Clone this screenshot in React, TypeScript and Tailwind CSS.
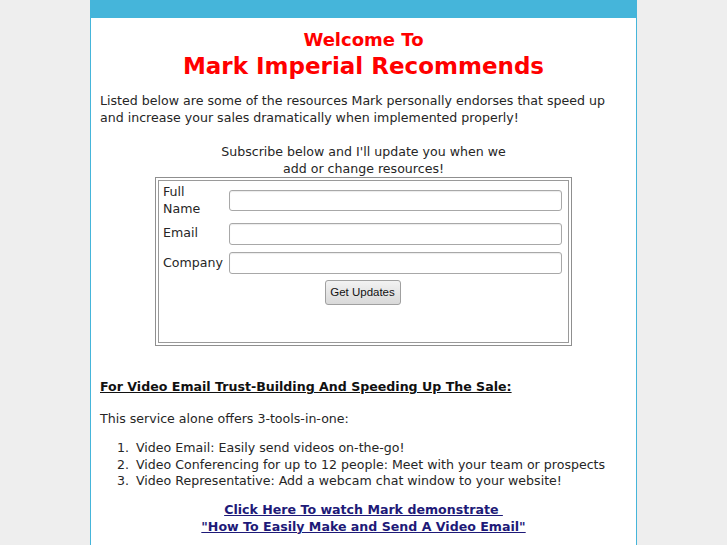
import React from "react";

export default function App() {
  const font = { fontFamily: '"DejaVu Sans", Verdana, sans-serif' };
  const items = [
    "Video Email: Easily send videos on-the-go!",
    "Video Conferencing for up to 12 people: Meet with your team or prospects",
    "Video Representative: Add a webcam chat window to your website!",
  ];
  return (
    <div className="min-h-screen w-full bg-[#eeeeee]" style={font}>
      <div className="mx-auto w-[547px] min-h-screen bg-white border-x border-[#45b5da]">
        <div className="h-[18px] bg-[#45b5da]" />
        <div className="px-[9px] text-[12.6px] leading-[16.5px] text-[#262626]">
          <div className="mt-[10px] text-center font-bold text-[#ff0000]">
            <div className="text-[18px] leading-[24px]">Welcome To</div>
            <div className="text-[23px] leading-[28px]">Mark Imperial Recommends</div>
          </div>
          <p className="mt-[13px]">
            Listed below are some of the resources Mark personally endorses that speed up and
            increase your sales dramatically when implemented properly!
          </p>
          <p className="mt-[18px] text-center">
            Subscribe below and I'll update you when we
            <br />
            add or change resources!
          </p>
          <div className="mx-auto w-[417px] border border-[#8f8f8f] p-[2px]">
            <div className="h-[163px] border border-[#9a9a9a] pl-[4px] pr-[6px] pt-[3px]">
              <div className="grid grid-cols-[auto_333px] items-center gap-x-[5px]">
                <div className="leading-[16.5px]">
                  Full
                  <br />
                  Name
                </div>
                <input className="h-[21px] w-full rounded-[3px] border border-[#a8a8a8] bg-white shadow-[inset_0_1px_1px_rgba(0,0,0,0.08)]" />
                <div className="mt-[6px] -translate-y-[1px]">Email</div>
                <input className="mt-[6px] h-[22px] w-full rounded-[3px] border border-[#a8a8a8] bg-white shadow-[inset_0_1px_1px_rgba(0,0,0,0.08)]" />
                <div className="mt-[7px]">Company</div>
                <input className="mt-[7px] h-[22px] w-full rounded-[3px] border border-[#a8a8a8] bg-white shadow-[inset_0_1px_1px_rgba(0,0,0,0.08)]" />
                <div className="col-span-2 mt-[6px] flex justify-center">
                  <button
                    className="h-[25px] w-[76px] rounded-[3px] border border-[#a0a0a0] bg-gradient-to-b from-[#f2f2f2] to-[#d9d9d9] text-[11.5px] text-[#111]"
                    style={{ fontFamily: '"Liberation Sans", Arial, sans-serif' }}
                  >
                    Get Updates
                  </button>
                </div>
              </div>
            </div>
          </div>
          <p className="mt-[33px] font-bold text-[#111] underline">
            For Video Email Trust-Building And Speeding Up The Sale:
          </p>
          <p className="mt-[15px]">This service alone offers 3-tools-in-one:</p>
          <ol className="mt-[13px] pl-[17px]">
            {items.map((t, i) => (
              <li key={i} className="flex">
                <span className="w-[19px] shrink-0">{i + 1}.</span>
                <span>{t}</span>
              </li>
            ))}
          </ol>
          <p className="mt-[11px] pb-[20px] text-center font-bold leading-[17px]">
            <a href="#" className="text-[#1e1a78] underline">
              Click Here To watch Mark demonstrate&nbsp;
              <br />
              "How To Easily Make and Send A Video Email"
            </a>
          </p>
        </div>
      </div>
    </div>
  );
}
